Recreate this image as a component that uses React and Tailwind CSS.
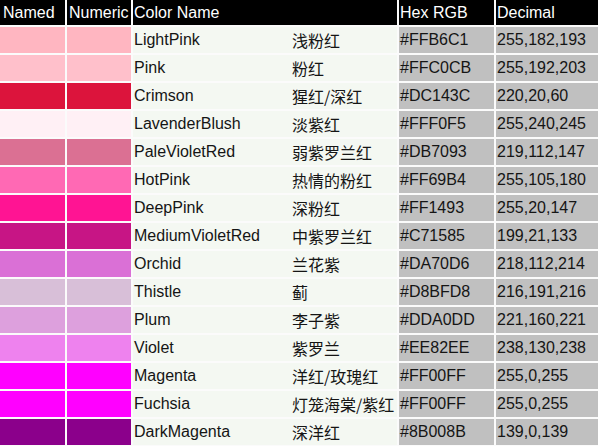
import React from "react";

const rows = [
  ["LightPink", "浅粉红", "#FFB6C1", "255,182,193"],
  ["Pink", "粉红", "#FFC0CB", "255,192,203"],
  ["Crimson", "猩红/深红", "#DC143C", "220,20,60"],
  ["LavenderBlush", "淡紫红", "#FFF0F5", "255,240,245"],
  ["PaleVioletRed", "弱紫罗兰红", "#DB7093", "219,112,147"],
  ["HotPink", "热情的粉红", "#FF69B4", "255,105,180"],
  ["DeepPink", "深粉红", "#FF1493", "255,20,147"],
  ["MediumVioletRed", "中紫罗兰红", "#C71585", "199,21,133"],
  ["Orchid", "兰花紫", "#DA70D6", "218,112,214"],
  ["Thistle", "蓟", "#D8BFD8", "216,191,216"],
  ["Plum", "李子紫", "#DDA0DD", "221,160,221"],
  ["Violet", "紫罗兰", "#EE82EE", "238,130,238"],
  ["Magenta", "洋红/玫瑰红", "#FF00FF", "255,0,255"],
  ["Fuchsia", "灯笼海棠/紫红", "#FF00FF", "255,0,255"],
  ["DarkMagenta", "深洋红", "#8B008B", "139,0,139"],
];

export default function App() {
  return (
    <div
      className="w-[598px] h-[446px] bg-[#fbfbfb] text-[16px] text-[#151515] overflow-hidden"
      style={{ fontFamily: '"Liberation Sans", Arial, "Noto Sans CJK SC", sans-serif' }}
    >
      <div className="grid grid-cols-[65px_64px_264px_95px_102px] gap-[2px]">
        <div className="h-[25px] bg-black text-white pl-[3px] leading-[25px]">Named</div>
        <div className="h-[25px] bg-black text-white pl-[2px] leading-[25px]">Numeric</div>
        <div className="h-[25px] bg-black text-white pl-[1px] leading-[25px]">Color Name</div>
        <div className="h-[25px] bg-black text-white pl-[1px] leading-[25px]">Hex RGB</div>
        <div className="h-[25px] bg-black text-white pl-[1px] leading-[25px]">Decimal</div>
        {rows.map(([name, cn, hex, dec]) => (
          <React.Fragment key={name}>
            <div className="h-[26px]" style={{ backgroundColor: hex }} />
            <div className="h-[26px]" style={{ backgroundColor: hex }} />
            <div className="h-[26px] bg-[#f4f8f2] flex items-center pl-[1px] leading-[26px]">
              <span className="w-[158px] shrink-0">{name}</span>
              <span style={{ fontFamily: '"Noto Sans CJK SC", sans-serif' }} className="text-[16px]">
                {cn}
              </span>
            </div>
            <div className="h-[26px] bg-[#c0c0c0] pl-[1px] leading-[26px]">{hex}</div>
            <div className="h-[26px] bg-[#c0c0c0] pl-[1px] leading-[26px]">{dec}</div>
          </React.Fragment>
        ))}
      </div>
    </div>
  );
}
